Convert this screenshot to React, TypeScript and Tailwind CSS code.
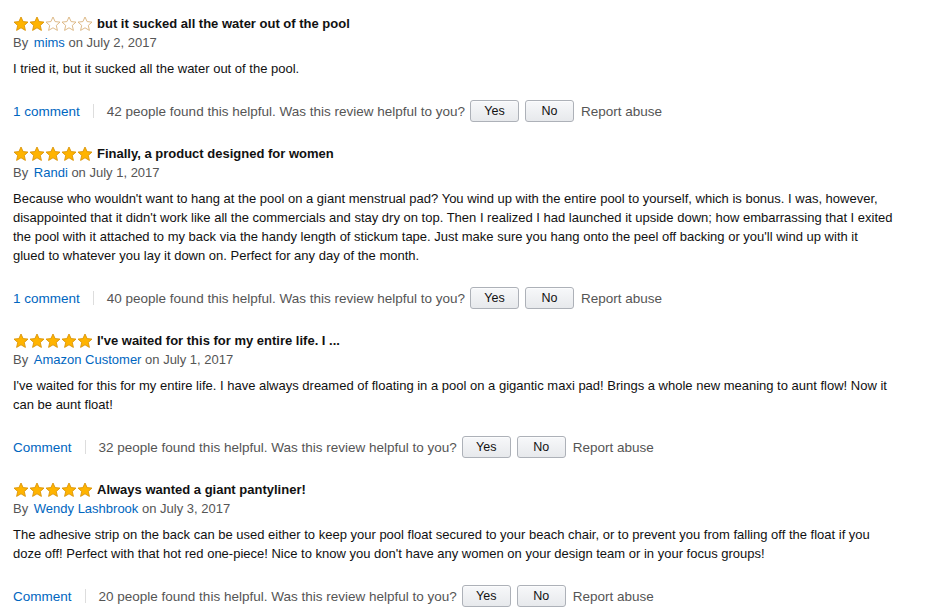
import React from "react";

interface Review {
  rating: number;
  title: string;
  author: string;
  date: string;
  body: string[];
  comments: string;
  helpful: number;
}

// body is kept as the lines the reference wraps into
const reviews: Review[] = [
  {
    rating: 2,
    title: "but it sucked all the water out of the pool",
    author: "mims",
    date: "July 2, 2017",
    body: ["I tried it, but it sucked all the water out of the pool."],
    comments: "1 comment",
    helpful: 42,
  },
  {
    rating: 5,
    title: "Finally, a product designed for women",
    author: "Randi",
    date: "July 1, 2017",
    body: [
      "Because who wouldn't want to hang at the pool on a giant menstrual pad? You wind up with the entire pool to yourself, which is bonus. I was, however,",
      "disappointed that it didn't work like all the commercials and stay dry on top. Then I realized I had launched it upside down; how embarrassing that I exited",
      "the pool with it attached to my back via the handy length of stickum tape. Just make sure you hang onto the peel off backing or you'll wind up with it",
      "glued to whatever you lay it down on. Perfect for any day of the month.",
    ],
    comments: "1 comment",
    helpful: 40,
  },
  {
    rating: 5,
    title: "I've waited for this for my entire life. I ...",
    author: "Amazon Customer",
    date: "July 1, 2017",
    body: [
      "I've waited for this for my entire life. I have always dreamed of floating in a pool on a gigantic maxi pad! Brings a whole new meaning to aunt flow! Now it",
      "can be aunt float!",
    ],
    comments: "Comment",
    helpful: 32,
  },
  {
    rating: 5,
    title: "Always wanted a giant pantyliner!",
    author: "Wendy Lashbrook",
    date: "July 3, 2017",
    body: [
      "The adhesive strip on the back can be used either to keep your pool float secured to your beach chair, or to prevent you from falling off the float if you",
      "doze off! Perfect with that hot red one-piece! Nice to know you don't have any women on your design team or in your focus groups!",
    ],
    comments: "Comment",
    helpful: 20,
  },
];

function Star({ filled }: { filled: boolean }) {
  return (
    <svg width="16" height="16" viewBox="0 0 16 16">
      <polygon
        points="8,1 10.1,5.6 15,6.1 11.3,9.4 12.4,14.4 8,11.8 3.6,14.4 4.7,9.4 1,6.1 5.9,5.6"
        fill={filled ? "#ffb400" : "#ffffff"}
        stroke={filled ? "#d9940a" : "#d9b27c"}
        strokeWidth="0.9"
        strokeLinejoin="round"
      />
    </svg>
  );
}

function Stars({ rating }: { rating: number }) {
  return (
    <div className="flex">
      {[0, 1, 2, 3, 4].map((i) => (
        <Star key={i} filled={i < rating} />
      ))}
    </div>
  );
}

function VoteButton({ label }: { label: string }) {
  return (
    <button className="h-[22px] w-[49px] rounded-[3px] border border-[#adb1b8] bg-gradient-to-b from-[#f7f8fa] to-[#e7e9ec] text-[12.5px] text-[#111] shadow-[0_1px_0_rgba(255,255,255,0.6)_inset]">
      {label}
    </button>
  );
}

export default function App() {
  return (
    <div
      className="bg-white px-[13px] pt-[14px] text-[13px] leading-[19px] text-[#111]"
      style={{ fontFamily: "'Liberation Sans', Arial, sans-serif" }}
    >
      <div className="flex flex-col gap-[22px]">
        {reviews.map((r, i) => (
          <div key={i}>
            <div className="flex items-center gap-[4px]">
              <Stars rating={r.rating} />
              <span className="font-bold">{r.title}</span>
            </div>
            <div className="text-[#555]">
              By <span className="ml-[2px] text-[#0066c0]">{r.author}</span> on {r.date}
            </div>
            <p className="mt-[7px]">
              {r.body.map((line, j) => (
                <React.Fragment key={j}>
                  {j > 0 && <br />}
                  {line}
                </React.Fragment>
              ))}
            </p>
            <div className="mt-[22px] flex items-center text-[13.5px] text-[#555]">
              <span className="text-[#0066c0]">{r.comments}</span>
              <span className="mx-[13px] h-[14px] w-px bg-[#ddd]" />
              <span>
                {r.helpful} people found this helpful. Was this review helpful to you?
              </span>
              <div className="ml-[5px] flex gap-[6px]">
                <VoteButton label="Yes" />
                <VoteButton label="No" />
              </div>
              <span className="ml-[7px]">Report abuse</span>
            </div>
          </div>
        ))}
      </div>
    </div>
  );
}
